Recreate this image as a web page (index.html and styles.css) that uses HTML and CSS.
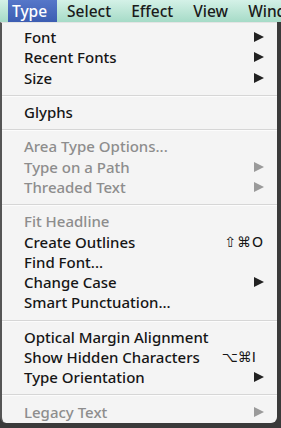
FILE: index.html
```html
<!DOCTYPE html>
<html>
<head>
<meta charset="UTF-8">
<title>Type menu</title>
<link rel="stylesheet" href="styles.css">
</head>
<body>

<div id="menubar">
	<span class="title active">Type</span>
	<span class="title">Select</span>
	<span class="title">Effect</span>
	<span class="title">View</span>
	<span class="title">Window</span>
</div><!-- menubar -->

<div id="menu">
	<div class="group">
		<div class="item"><span>Font</span><i class="arrow"></i></div>
		<div class="item"><span>Recent Fonts</span><i class="arrow"></i></div>
		<div class="item"><span>Size</span><i class="arrow"></i></div>
	</div>
	<div class="group">
		<div class="item"><span>Glyphs</span></div>
	</div>
	<div class="group">
		<div class="item off"><span>Area Type Options...</span></div>
		<div class="item off"><span>Type on a Path</span><i class="arrow"></i></div>
		<div class="item off"><span>Threaded Text</span><i class="arrow"></i></div>
	</div>
	<div class="group">
		<div class="item off"><span>Fit Headline</span></div>
		<div class="item"><span>Create Outlines</span><kbd>⇧⌘O</kbd></div>
		<div class="item"><span>Find Font...</span></div>
		<div class="item"><span>Change Case</span><i class="arrow"></i></div>
		<div class="item"><span>Smart Punctuation...</span></div>
	</div>
	<div class="group">
		<div class="item"><span>Optical Margin Alignment</span></div>
		<div class="item"><span>Show Hidden Characters</span><kbd class="alt">⌥⌘I</kbd></div>
		<div class="item"><span>Type Orientation</span><i class="arrow"></i></div>
	</div>
	<div class="group">
		<div class="item off"><span>Legacy Text</span><i class="arrow"></i></div>
	</div>
</div><!-- menu -->

</body>
</html>
```

FILE: styles.css
```css
body {
	margin: 0;
	width: 281px;
	height: 428px;
	overflow: hidden;
	background: #3a3a3a;
	font-family: "Noto Sans", "DejaVu Sans", sans-serif;
}

#menubar {
	display: flex;
	height: 22px;
	padding-left: 8px;
	white-space: nowrap;
	overflow: hidden;
	background: linear-gradient(#d4f1e7, #a6dbc7);
}

#menubar .title {
	flex: none;
	padding: 0 10px;
	font-size: 15.5px;
	font-weight: 500;
	line-height: 22px;
	color: #1a1a1a;
}

#menubar .title.active {
	background: linear-gradient(#5677c9, #3c5db2);
	color: #fff;
	padding: 0 10px 0 4px;
}

#menu {
	width: 277px;
	height: 401px;
	background: #f4f4f4;
	border-left: 2px solid #555;
	border-top: 1px solid #e4e4e4;
	border-radius: 0 0 6px 6px;
	box-sizing: border-box;
}

.group {
	padding: 6px 0 7px;
	border-bottom: 1px solid #d6d6d6;
	box-shadow: 0 1px 0 #fcfcfc;
}

.group:first-child {
	padding-top: 4px;
}

.group:last-child {
	border-bottom: none;
	box-shadow: none;
}

.item {
	display: flex;
	align-items: center;
	height: 20.3px;
	padding: 0 13px 0 22px;
	font-size: 15px;
	font-weight: 500;
	color: #161616;
	white-space: nowrap;
}

.item span {
	flex: 1;
}

.item.off {
	color: #8d8d8d;
}

.arrow {
	width: 0;
	height: 0;
	border-left: 10px solid #222;
	border-top: 5px solid transparent;
	border-bottom: 5px solid transparent;
}

.item.off .arrow {
	border-left-color: #9a9a9a;
}

kbd {
	font-family: "DejaVu Sans", sans-serif;
	font-size: 14px;
	color: #161616;
	letter-spacing: 1px;
}

kbd.alt {
	margin-right: 8px;
	letter-spacing: 0;
}
```
